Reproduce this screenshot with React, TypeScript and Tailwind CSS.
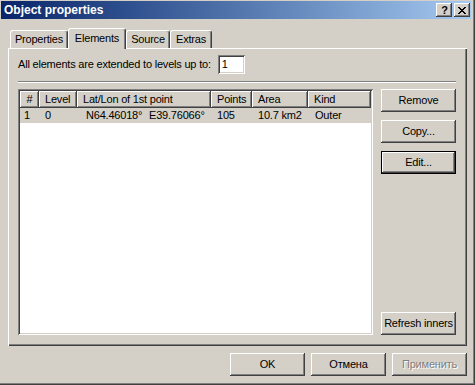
import type { ReactNode } from 'react';

// Win2k-style 3D edges
const raised =
  'shadow-[inset_-1px_-1px_#404040,inset_1px_1px_#ffffff,inset_-2px_-2px_#808080,inset_2px_2px_#d4d0c8]';
const raisedDefault = 'border border-black shadow-[inset_-1px_-1px_#404040,inset_1px_1px_#ffffff,inset_-2px_-2px_#808080]';
const sunken =
  'shadow-[inset_1px_1px_#808080,inset_-1px_-1px_#ffffff,inset_2px_2px_#404040,inset_-2px_-2px_#d4d0c8]';
const headerCell = 'shadow-[inset_-1px_-1px_#404040,inset_1px_1px_#ffffff,inset_-2px_-2px_#808080]';

interface BtnProps {
  children: ReactNode;
  isDefault?: boolean;
  disabled?: boolean;
  className?: string;
}

function Btn({ children, isDefault = false, disabled = false, className = '' }: BtnProps) {
  return (
    <div
      className={`w-[75px] h-[23px] flex items-center justify-center bg-[#d4d0c8] ${
        isDefault ? raisedDefault : raised
      } ${disabled ? 'text-[#808080] [text-shadow:1px_1px_0_#ffffff]' : 'text-black'} ${className}`}
    >
      {children}
    </div>
  );
}

function Tab({ label, width, active = false }: { label: string; width: number; active?: boolean }) {
  return (
    <div
      style={{ width }}
      className={`flex items-center justify-center bg-[#d4d0c8] border-l border-t border-r border-l-white border-t-white border-r-[#404040] rounded-t-[3px] shadow-[inset_-1px_0_#808080] ${
        active ? 'h-[21px] -mb-px relative z-10 pb-[2px]' : 'h-[18px]'
      }`}
    >
      {label}
    </div>
  );
}

const columns = [
  { title: '#', w: 'w-[19px]', head: 'justify-center', cell: 'pl-[4px]' },
  { title: 'Level', w: 'w-[38px]', head: 'pl-[6px]', cell: 'pl-[6px]' },
  { title: 'Lat/Lon of 1st point', w: 'w-[134px]', head: 'pl-[6px]', cell: 'pl-[9px]' },
  { title: 'Points', w: 'w-[41px]', head: 'pl-[6px]', cell: 'pl-[6px]' },
  { title: 'Area', w: 'w-[56px]', head: 'pl-[6px]', cell: 'pl-[6px]' },
  { title: 'Kind', w: 'flex-1', head: 'pl-[6px]', cell: 'pl-[7px]' },
];

export default function App() {
  const row: ReactNode[] = [
    '1',
    '0',
    <>
      <span className="inline-block w-[63px]">N64.46018°</span>
      <span>E39.76066°</span>
    </>,
    '105',
    '10.7 km2',
    'Outer',
  ];

  return (
    <div className="w-[475px] h-[385px] bg-[#d4d0c8] flex flex-col overflow-hidden font-['Liberation_Sans',Arial,sans-serif] text-[11px] tracking-[-0.2px] text-black shadow-[inset_-1px_-1px_#404040,inset_-2px_-2px_#808080]">
      {/* Title bar */}
      <div className="ml-[1px] mt-[1px] w-[470px] h-[18px] flex items-center justify-between pl-[3px] pr-[1px] bg-linear-to-r from-[#0a246a] to-[#a6caf0]">
        <span className="text-white font-bold text-[12px] tracking-normal leading-none">Object properties</span>
        <div className="flex gap-[2px]">
          <div className={`w-[16px] h-[14px] flex items-center justify-center bg-[#d4d0c8] ${raised}`}>
            <span className="font-bold text-[11px] leading-none tracking-normal pl-px">?</span>
          </div>
          <div className={`w-[16px] h-[14px] flex items-center justify-center bg-[#d4d0c8] ${raised}`}>
            <svg width="8" height="7" viewBox="0 0 8 7" shapeRendering="crispEdges">
              <path
                d="M0 0h2v1H0zM6 0h2v1H6zM1 1h2v1H1zM5 1h2v1H5zM2 2h4v1H2zM3 3h2v1H3zM2 4h4v1H2zM1 5h2v1H1zM5 5h2v1H5zM0 6h2v1H0zM6 6h2v1H6z"
                fill="#000"
              />
            </svg>
          </div>
        </div>
      </div>

      <div className="ml-[8px] w-[459px] flex flex-col">
        {/* Tabs */}
        <div className="mt-[9px] h-[20px] pl-[2px] flex items-end">
          <Tab label="Properties" width={58} />
          <Tab label="Elements" width={58} active />
          <Tab label="Source" width={44} />
          <Tab label="Extras" width={42} />
        </div>

        {/* Tab page */}
        <div className="h-[298px] flex flex-col pl-[10px] pr-[11px] pt-[7px] bg-[#d4d0c8] shadow-[inset_1px_1px_#ffffff,inset_-1px_-1px_#404040,inset_-2px_-2px_#808080]">
          <div className="h-[19px] flex items-center">
            <span>All elements are extended to levels up to:</span>
            <div className={`ml-[7px] w-[27px] h-[19px] bg-white flex items-center pl-[4px] ${sunken}`}>1</div>
          </div>

          <div className="mt-[7px] h-[2px] border-t border-b border-t-[#808080] border-b-white" />

          <div className="mt-[6px] h-[246px] flex gap-[8px]">
            {/* List view */}
            <div className={`w-[355px] h-full bg-white p-[2px] flex flex-col ${sunken}`}>
              <div className="h-[17px] flex bg-[#d4d0c8]">
                {columns.map((c) => (
                  <div key={c.title} className={`${c.w} h-full flex items-center ${c.head} ${headerCell}`}>
                    {c.title}
                  </div>
                ))}
              </div>
              <div className="h-[15px] flex bg-[#d4d0c8]">
                {columns.map((c, i) => (
                  <div key={c.title} className={`${c.w} h-full flex items-center whitespace-nowrap ${c.cell}`}>
                    {row[i]}
                  </div>
                ))}
              </div>
            </div>

            {/* Side buttons */}
            <div className="flex flex-col gap-[8px]">
              <Btn>Remove</Btn>
              <Btn>Copy...</Btn>
              <Btn isDefault>Edit...</Btn>
              <Btn className="mt-auto">Refresh inners</Btn>
            </div>
          </div>
        </div>

        {/* Dialog buttons */}
        <div className="mt-[7px] flex justify-end gap-[6px]">
          <Btn>OK</Btn>
          <Btn>Отмена</Btn>
          <Btn disabled>Применить</Btn>
        </div>
      </div>
    </div>
  );
}
